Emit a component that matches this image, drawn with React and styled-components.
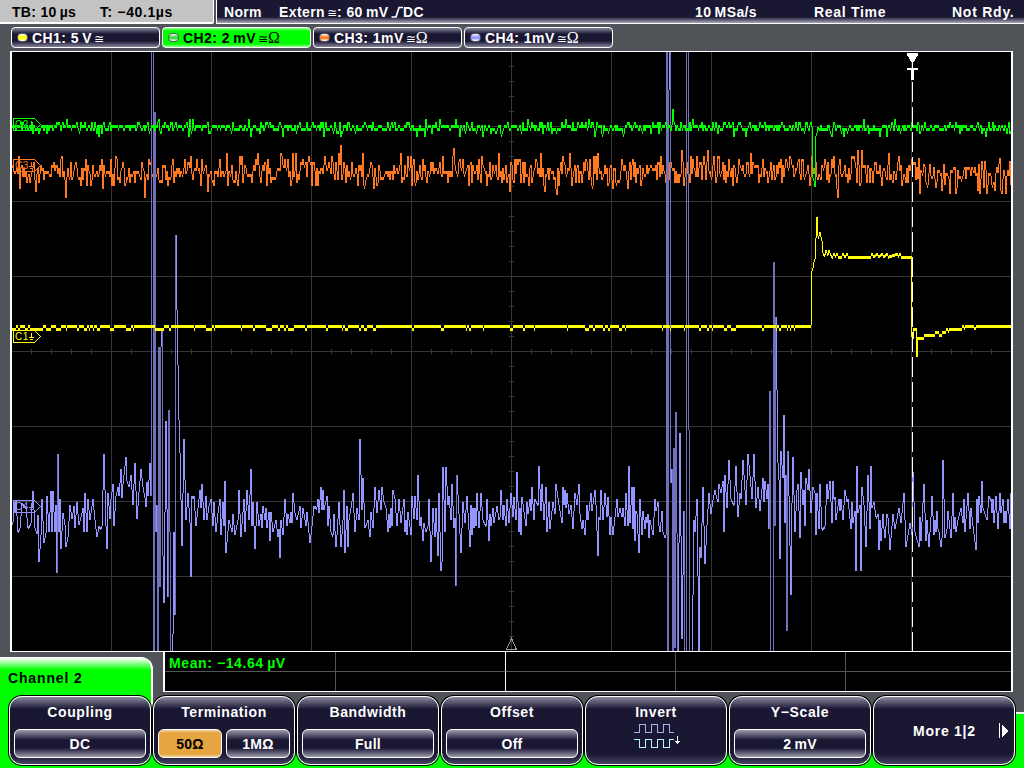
import React from 'react'
import styled, { createGlobalStyle } from 'styled-components'

// Plot geometry, in screen pixels
const LEFT = 10
const TOP = 51
const WIDTH = 1003
const HEIGHT = 601
const FIRST = 12
const LAST = 1011

// Small seeded generator, so the noise is the same on every load
const random = (seed) => () => {
  seed = (seed * 1664525 + 1013904223) % 4294967296
  return seed / 4294967296
}

// Recorded turning points of channel 4, x y pairs in thirds of a pixel
const records = [
  { x: 0, y: 420, data: '36 305 39 245 42 280 47 240 53 335 58 325 64 250 75 262 83 325 90 310 96 212 103 325 108 342 111 285 115 425 120 345 125 238 130 370 135 340 140 228 144 335 150 212 154 335 158 212 162 335 165 255 167 460 170 103 173 335 179 238 182 388 188 280 193 315 197 380 203 352 209 255 215 298 220 257 224 325 229 247 234 315 240 290 247 265 251 335 254 220 258 335 262 238 268 300 278 238 283 300 288 352 294 318 300 325 305 318 310 103 315 318 317 388 321 220 327 298 331 238 337 193 341 318 346 228 352 202 355 228 360 148 363 235 368 193 375 112 380 182 386 200 390 165 397 255 402 130 410 298 414 215 420 148 426 200 432 235 434 262 437 185 442 228 447 130 450 228' },
  { x: 0, y: 0, data: '453 135 456 135 459 1960 462 336 465 1596 468 1515 471 1960 474 1040 477 1760 480 1040 483 993 486 1668 489 1809 495 1263 501 1791 504 1230 510 1960 513 1960 516 1902 519 1596 522 1845 525 705 528 930 534 1260 537 1359 543 1638 549 1317 555 1560' },
  { x: 0, y: 420, data: '563 220 567 308 572 470 575 228 581 228 587 318 593 265 597 210 602 265 605 193 611 300 615 228 620 300 625 257 630 238 636 318 641 247 646 335 652 280 658 238 662 345 666 247 670 318 674 184 677 398 684 300 693 335 698 283 704 345 711 300 716 210 722 352 729 238 734 335 738 210 744 300' },
  { x: 250, y: 420, data: '0 148 3 318 8 247 13 388 20 247 25 318 30 283 35 325 38 257 42 300 45 265 48 325 55 275 59 362 62 275 66 335 75 300 81 352 86 328 89 415 92 300 96 345 103 238 108 318 112 283 117 308 120 275 125 308 128 220 132 280 140 300 147 257 150 325 158 265 165 318 169 275 177 370 183 318 190 257 198 262 201 238 204 280 212 202 215 270 218 210 221 270 228 228 231 318 234 257 240 335 246 345 251 283 255 380 260 345 266 247 272 380 278 300 281 210 284 398 288 257 291 380 294 300 300 265 306 220 314 335 320 265 326 300 329 57 333 270 338 175 344 325 351 300 357 352 362 275 368 325 374 202 379 280 385 210 391 270 395 202 400 247 407 265 411 335 414 283 417 325 420 265 425 318 428 210 434 238 438 318 446 238 451 308 459 238 461 335 465 300 468 345 473 275 480 345 485 228 491 298 494 228 499 300 503 166 508 318 512 292 516 362 521 310 526 335 533 318 536 238 542 425 548 265 552 352 555 265 561 407 566 220 570 452 574 425 578 140 584 335 587 140 591 255 594 228 600 300 604 193 610 325 613 293 617 497 620 166 625 283 632 398 636 247 644 308 650 228 657 380 660 255 663 345 666 265 669 325 673 265 675 318 680 220 686 325 692 220 698 300 705 318 710 238 714 362 719 283 722 318 726 265 731 308 740 257 744 300 749 290' },
  { x: 500, y: 400, data: '2 270 8 360 11 315 15 378 20 298 26 368 32 280 38 350 41 290 45 360 50 216 54 395 57 325 60 405 64 290 75 378 80 305 83 342 87 298 91 332 95 262 99 360 104 298 111 315 116 198 122 332 125 252 130 360 135 262 140 395 144 305 149 386 156 305 160 325 164 342 167 252 175 315 183 368 185 262 188 315 191 270 194 325 197 280 204 342 210 315 218 386 224 280 228 315 234 252 237 342 243 386 247 360 252 405 258 315 262 360 270 280 274 332 282 270 287 315 291 467 294 350 299 360 302 270 308 360 314 280 318 350 321 290 327 405 332 350 336 405 341 378 348 298 353 350 359 325 363 350 366 325 372 378 377 280 382 378 386 198 389 368 393 262 396 386 398 262 401 422 405 332 410 342 414 458 419 298 425 405 428 332 432 386 436 350 440 368 442 342 444 413 448 360 456 405 462 298 467 332 471 305 474 378 479 395 483 332 488 395 492 413' },
  { x: 0, y: 0, data: '1995 1605 1998 135 2001 1960 2004 270 2007 150 2010 1449 2013 1407 2016 1960 2019 1344 2022 1944 2025 1236 2031 1960 2037 1299 2043 1917 2049 1533 2052 1960 2055 1960 2058 135 2061 135 2064 1290 2067 1960 2073 1960 2076 1785 2079 1560 2082 1596 2088 1497 2094 1960 2097 1641 2100 1674 2106 1461 2112 1692 2118 1575 2124 1479' },
  { x: 500, y: 400, data: '632 342 638 300 643 270 648 298 653 305 656 252 661 280 667 243 671 395 674 225 680 325 686 180 692 298 701 315 707 198 713 350 719 280 722 298 728 180 736 315 743 162' },
  { x: 750, y: 370, data: '0 350 3 388 11 252 17 413 23 350 29 422 38 325 41 395 44 332 48 388 51 342 53 476 56 63 59 860 62 860 65 860 69 -325 74 467 77 -160 81 280 86 330 89 566 92 243 96 325 99 135 102 458 105 315 107 782 110 243 115 378 120 674 123 400 128 262 134 485 138 360 143 342 147 503 152 306 156 405 159 360 162 467 167 325 171 360 174 298 180 430 186 352 192 370 195 494 200 370 204 476 209 342 215 476 222 467 228 342 231 386 238 332 243 458 245 332 248 386 252 380 254 450 264 388 268 422 272 388 278 450 284 360 288 395 293 388 300 476 303 395 306 458 312 422 317 602 320 288 323 430 327 405 332 602 335 350 341 405 347 530 353 315 357 476 360 288 363 413 369 397 375 440 381 432 384 540 387 450 392 512 396 432 400 476 404 503 408 432 413 443 417 540 422 503 428 432 434 476 444 413 452 458 459 370 467 530 477 458 483 494 488 306 492 485 504 530 507 440 511 512 519 342 525 512 530 450 534 530 540 440 545 378 549 494 552 450 554 485 557 422 561 476 566 485 570 530 575 503 578 270 582 503 588 476 593 422 602 503 606 370 610 476 614 440 617 485 621 450 630 413 637 458 639 388 642 485 651 370 657 476 660 413 668 467 675 540 678 388 681 458 684 378 690 430 693 332 698 413 710 450 714 378 720 388 723 430 726 388 729 458 735 378 741 476 747 370 752 430 756 388 759 458 762 422 766 458 771 388 777 476 780 370' },
]

// Fills the samples between turning points, one sample for each pixel column
const interpolate = (points) => {
  const out = []
  points.forEach(([x, y], i) => {
    out[x] = y
    const next = points[i + 1]
    if (next) {
      for (let n = x + 1; n < next[0]; n++) {
        out[n] = Math.round(y + ((next[1] - y) * (n - x)) / (next[0] - x))
      }
    }
  })
  return out
}

const channel4 = interpolate(
  records.flatMap(({ x, y, data }) => {
    const n = data.split(' ').map(Number)
    const points = []
    let last = 0
    for (let i = 0; i < n.length; i += 2) {
      last = Math.max(last + 1, x + Math.floor(n[i] / 3))
      points.push([last, Math.round(y + n[i + 1] / 3)])
    }
    return points
  })
)

const channel1 = () => {
  const rnd = random(11)
  const out = []
  let low = false
  for (let x = FIRST; x <= LAST; x++) {
    if (rnd() < 0.6) low = rnd() < (x < 420 ? 0.4 : 0.25)
    out[x] = low && x < 800 ? 328 : 325
  }
  const pulse = interpolate([
    [810, 325], [811, 271], [812, 268], [813, 262], [814, 259], [815, 238], [816, 217], [817, 236], [818, 236],
    [819, 232], [820, 237], [821, 241], [822, 253], [824, 255], [825, 250], [826, 253], [827, 255], [828, 250], [829, 253],
    [831, 256], [832, 256], [833, 253], [834, 256], [836, 253], [837, 256], [841, 256], [842, 253], [844, 256], [846, 253], [847, 256],
    [870, 256], [871, 253], [872, 256], [876, 253], [877, 256], [881, 253], [882, 256], [886, 253], [887, 256],
    [896, 253], [897, 256], [899, 253], [900, 256], [910, 256], [911, 337], [912, 339], [913, 328], [915, 328], [916, 357], [917, 337],
    [923, 337], [924, 334], [934, 334], [935, 331], [937, 331], [938, 334], [941, 334], [942, 331], [945, 331], [946, 328], [947, 331],
    [949, 328], [961, 328], [962, 325], [963, 328], [965, 325], [972, 325], [974, 328], [976, 325], [1011, 325],
  ])
  pulse.forEach((y, x) => { out[x] = y })
  return out
}

const channel2 = () => {
  const rnd = random(5)
  const out = []
  for (let x = FIRST; x <= LAST; x++) {
    const r = rnd()
    out[x] = r < 0.02 ? 119 : r < 0.12 ? 122 : r < 0.42 ? 125 : r < 0.77 ? 128 : r < 0.96 ? 131 : r < 0.985 ? 134 : 137
  }
  out[672] = 109
  out[811] = 127
  out[812] = 178
  out[813] = 181
  out[814] = 187
  out[815] = 136
  out[816] = 133
  out[817] = 127
  return out
}

const channel3 = () => {
  const rnd = random(77)
  const out = []
  for (let x = FIRST; x <= LAST; x++) {
    const spread = (rnd() + rnd() + rnd() - 1.5) * 15
    const base = x > 915 ? 176 : 171
    const r = rnd()
    const spike = r < 0.05 ? -10 : r > 0.94 ? 9 : 0
    out[x] = base + Math.round((spread + spike) / 3) * 3
  }
  out[340] = 145
  out[453] = 148
  return out
}

// Every column joins one sample to the next. Fast edges are drawn fainter.
const columns = (samples, fast) => {
  let d = ''
  for (let x = FIRST; x < LAST; x++) {
    const a = samples[x - 1] ?? samples[x]
    const b = samples[x]
    const top = Math.max(52, Math.min(a, b))
    const bottom = Math.min(651, Math.max(a, b, Math.min(a, b) + 3))
    const isFast = bottom - top > 110
    if (bottom > top && (fast === undefined || fast === isFast)) d += `M${x} ${top}h1V${bottom}h-1z`
  }
  return d
}

const range = (from, to, step) => {
  const out = []
  for (let n = from; n <= to; n += step) out.push(n)
  return out
}

const Marker = ({ y, color, name }) => (
  <g stroke={color} fill="none">
    <path d={`M13.5 ${y + 0.5}h21l6 6l-6 6h-21z`} />
    <text x="15" y={y + 10} fill={color} stroke="none" fontFamily="Liberation Sans" fontSize="10" fontWeight="400" letterSpacing="0.5">{name}</text>
    <path d={`M31.5 ${y + 3}v5M29 ${y + 7.5}h5M30 ${y + 9.5}h3`} />
  </g>
)

const Scope = () => (
  <Plot viewBox={`${LEFT} ${TOP} ${WIDTH} ${HEIGHT}`} shapeRendering="crispEdges">
    <rect x="10" y="51" width="1003" height="601" fill="#fff" />
    <rect x="12" y="52" width="999" height="599" fill="#000" />
    <g fill="#363636">
      {range(111, 911, 100).map((x) => <rect key={x} x={x} y="52" width="1" height="599" />)}
      {range(126, 576, 75).map((y) => <rect key={y} x="12" y={y} width="999" height="1" />)}
      {range(31, 991, 20).map((x) => <rect key={x} x={x} y="349" width="1" height="5" />)}
      {range(66, 636, 15).map((y) => <rect key={y} x="509" y={y} width="5" height="1" />)}
    </g>
    <path d={columns(channel3())} fill="#ff7820" />
    <path d={columns(channel4, true)} fill="#7070bc" />
    <path d={columns(channel4, false)} fill="#9494ff" />
    <path d={columns(channel1())} fill="#ff0" />
    <path d={columns(channel2())} fill="#0f0" />
    <Marker y={118} color="#0f0" name="C2" />
    <Marker y={159} color="#ff7820" name="C3" />
    <Marker y={330} color="#ff0" name="C1" />
    <Marker y={500} color="#9494ff" name="C4" />
    <path d="M912.5 82V651" stroke="#fff" strokeDasharray="20 5" />
    <path d="M907 53h11v2l-5 8v5h5v2h-4v10h-3v-10h-4v-2h5v-5l-5-8z" fill="#fff" />
    <path d="M511.5 638.5l-5 11h10z" stroke="#999" fill="none" />
  </Plot>
)

const SlopeIcon = () => (
  <svg width="12" height="12" viewBox="0 0 12 12" fill="none" stroke="#fff" strokeWidth="1.7">
    <path d="M0.500 11H5L8 1.500h4" />
  </svg>
)

const InvertIcon = () => (
  <svg width="48" height="27" viewBox="0 0 48 27" fill="none" shapeRendering="crispEdges">
    <path d="M0 10.500h5.500v-8h6v8h6v-8h6v8h6v-8h6v8h4" stroke="#a4b4e4" />
    <path d="M0 17.500h5.500v8h6v-8h6v8h6v-8h6v8h6v-8h4" stroke="#b4f4ff" />
    <path d="M43.500 14v8M41 19.500h5M42 20.500h3" stroke="#fff" />
  </svg>
)

const channels = [
  { name: 'CH1: 5\u2009V', color: '#ff0' },
  { name: 'CH2: 2\u2009mV', color: '#3ad63a', active: true, ohm: true },
  { name: 'CH3: 1mV', color: '#ff7820', ohm: true },
  { name: 'CH4: 1mV', color: '#9494ff', ohm: true },
]

export default function App() {
  return (
    <>
      <Global />
      <Screen>
        <TopBar>
          <TimeBase>
            <Text $width="88px" $space="0.3px">TB: 10{'\u2009'}µs</Text>
            <Text $space="0.6px">T: −40.1µs</Text>
          </TimeBase>
          <Status>
            <Text $width="55px" $space="0.3px">Norm</Text>
            <Text $width="416px" $space="0.4px">Extern<Coupling>≅</Coupling>: 60{'\u2009'}mV <SlopeIcon />DC</Text>
            <Text $width="119px" $space="0.4px">10{'\u2009'}MSa/s</Text>
            <Text $width="138px" $space="0.7px">Real Time</Text>
            <Text $space="0.75px">Not Rdy.</Text>
          </Status>
        </TopBar>
        <Channels>
          {channels.map((item) => (
            <ChannelTab key={item.name} $active={item.active}>
              <Lamp $color={item.color} />
              <Text $space="0.45px">{item.name}<Coupling>≅</Coupling>{item.ohm && <Ohm>Ω</Ohm>}</Text>
            </ChannelTab>
          ))}
        </Channels>
        <Scope />
        <Footer>
          <GreenStrip />
          <MenuTitle>Channel 2</MenuTitle>
          <Measurements>
            <Cell $green>Mean: −14.64{'\u2009'}µV</Cell><Cell /><Cell $bright /><Cell /><Cell />
            <Cell /><Cell /><Cell $bright /><Cell /><Cell />
          </Measurements>
          <Menu>
            <MenuItem>
              <MenuLabel>Coupling</MenuLabel>
              <Options><Option>DC</Option></Options>
            </MenuItem>
            <MenuItem>
              <MenuLabel>Termination</MenuLabel>
              <Options><Option $selected>50Ω</Option><Option>1MΩ</Option></Options>
            </MenuItem>
            <MenuItem>
              <MenuLabel>Bandwidth</MenuLabel>
              <Options><Option>Full</Option></Options>
            </MenuItem>
            <MenuItem>
              <MenuLabel>Offset</MenuLabel>
              <Options><Option>Off</Option></Options>
            </MenuItem>
            <MenuItem>
              <MenuLabel>Invert</MenuLabel>
              <IconRow><InvertIcon /></IconRow>
            </MenuItem>
            <MenuItem>
              <MenuLabel>Y−Scale</MenuLabel>
              <Options><Option>2{'\u2009'}mV</Option></Options>
            </MenuItem>
            <MenuItem>
              <More>
                More 1|2
                <svg width="10" height="16" viewBox="0 0 10 16" shapeRendering="crispEdges">
                  <path d="M0 0h1v15h-1zM3 2l6 6l-6 6z" fill="#fff" />
                </svg>
              </More>
            </MenuItem>
          </Menu>
        </Footer>
      </Screen>
    </>
  )
}

const Global = createGlobalStyle`
body {
  margin: 0;
  overflow: hidden;
}
`

const Screen = styled.div`
width: 1024px;
height: 768px;
display: grid;
grid-template-rows: 24px 27px 601px 116px;
background-color: #505458;
color: #fff;
font-family: "Liberation Sans", sans-serif;
font-weight: 700;
font-size: 14px;
letter-spacing: 0.4px;
white-space: pre;
overflow: hidden;
`

const TopBar = styled.div`
display: flex;
gap: 2px;
`

const TimeBase = styled.div`
display: flex;
align-items: center;
box-sizing: border-box;
width: 214px;
padding-left: 12px;
background-color: #c3c3c3;
border-right: 1px solid #fff;
border-bottom: 2px solid #fff;
border-bottom-right-radius: 2px;
color: #000;
`

const Status = styled.div`
display: flex;
flex: 1;
align-items: center;
box-sizing: border-box;
padding-left: 7px;
border-left: 1px solid #fff;
border-bottom: 1px solid #fff;
background: linear-gradient(#1a1733 17px, #aaaabc 23px);
`

const Text = styled.span`
flex: none;
width: ${(props) => props.$width || 'auto'};
letter-spacing: ${(props) => props.$space || '0.4px'};
line-height: 16px;
padding-top: 1px;
svg {
  margin-left: -2px;
  vertical-align: -1px;
}
`

const Coupling = styled.span`
margin-left: 2px;
font-family: "DejaVu Sans", sans-serif;
font-weight: 400;
font-size: 12px;
line-height: 12px;
letter-spacing: 0;
`

const Ohm = styled.span`
font-family: "Liberation Serif", serif;
font-weight: 400;
font-size: 16px;
line-height: 12px;
letter-spacing: 0;
`

const Channels = styled.div`
display: flex;
gap: 2px;
padding: 3px 0 3px 11px;
`

const ChannelTab = styled.div`
display: flex;
align-items: center;
gap: 4px;
box-sizing: border-box;
width: 149px;
padding-left: 5px;
border: 1px solid #fff;
border-radius: 4px;
color: ${(props) => (props.$active ? '#000' : '#fff')};
background: ${(props) => props.$active
  ? 'linear-gradient(#9f9 0, #0f0 3px, #0f0 16px, #9f9 19px)'
  : 'linear-gradient(#85859a 0, #1a1733 6px, #1a1733 13px, #85859a 19px)'};
`

const Lamp = styled.span`
box-sizing: border-box;
width: 11px;
height: 9px;
border: 1px solid #565668;
border-radius: 4px;
background: linear-gradient(#fff, ${(props) => props.$color} 45%, ${(props) => props.$color} 60%, #fff);
`

const Plot = styled.svg`
display: block;
width: 1003px;
height: 601px;
margin-left: 10px;
`

const Footer = styled.div`
display: grid;
grid-template-columns: 163px 850px 11px;
grid-template-rows: 40px 76px;
`

const GreenStrip = styled.div`
grid-area: 2 / 1 / 3 / 4;
margin-top: 20px;
border-top: 2px solid #fff;
background-color: #0f0;
`

const MenuTitle = styled.div`
grid-area: 1 / 1 / 3 / 2;
box-sizing: border-box;
width: 153px;
height: 60px;
margin-top: 5px;
padding: 13px 0 0 8px;
border-right: 2px solid #fff;
border-top-right-radius: 12px;
background: linear-gradient(#fff 1px, #0f0 13px);
color: #000;
line-height: 16px;
letter-spacing: 0.85px;
`

const Measurements = styled.div`
grid-area: 1 / 2 / 2 / 3;
display: grid;
box-sizing: border-box;
grid-template-columns: 170px repeat(4, 170px);
grid-template-rows: 20px 19px;
border: solid #fff;
border-width: 0 2px 1px 2px;
background-color: #000;
overflow: hidden;
`

const Cell = styled.div`
box-sizing: border-box;
padding-left: 4px;
color: #0f0;
line-height: 22px;
letter-spacing: 0.6px;
border-left: ${(props) => (props.$green ? '0' : '1px')} solid ${(props) => (props.$bright ? '#fff' : '#555')};
border-bottom: 1px solid #555;
&:nth-child(n + 6) {
  border-bottom: 0;
}
&:nth-child(6) {
  border-left: 0;
}
`

const Menu = styled.div`
grid-area: 2 / 1 / 3 / 4;
display: flex;
gap: 2px;
padding: 4px 0 3px 9px;
`

const MenuItem = styled.div`
display: flex;
flex-direction: column;
box-sizing: border-box;
width: 142px;
height: 69px;
border: 1px solid #fff;
border-radius: 13px;
box-shadow: 0 0 0 1px #000;
background: linear-gradient(#8a8a9e 0, #1a1733 12px, #1a1733 57px, #454260 67px);
text-align: center;
`

const MenuLabel = styled.div`
height: 24px;
padding-top: 7px;
line-height: 16px;
box-sizing: border-box;
letter-spacing: 0.6px;
`

const Options = styled.div`
display: flex;
gap: 4px;
height: 29px;
margin-top: 8px;
padding: 0 4px;
`

const Option = styled.div`
flex: 1;
box-sizing: border-box;
border: 1px solid #fff;
border-radius: 6px;
line-height: 28px;
letter-spacing: 0.3px;
color: ${(props) => (props.$selected ? '#000' : '#fff')};
background: ${(props) => props.$selected
  ? 'linear-gradient(#f3d3a0 0, #e6a540 3px, #e6a540 24px, #f3d3a0 27px)'
  : 'linear-gradient(#9c9cae 0, #1a1733 10px, #1a1733 18px, #9c9cae 27px)'};
`

const IconRow = styled.div`
padding-left: 4px;
svg {
  display: block;
  margin: 1px auto 0;
}
`

const More = styled.div`
display: flex;
flex: 1;
align-items: center;
justify-content: space-between;
padding: 0 5px 0 39px;
line-height: 16px;
letter-spacing: 0.75px;
`
